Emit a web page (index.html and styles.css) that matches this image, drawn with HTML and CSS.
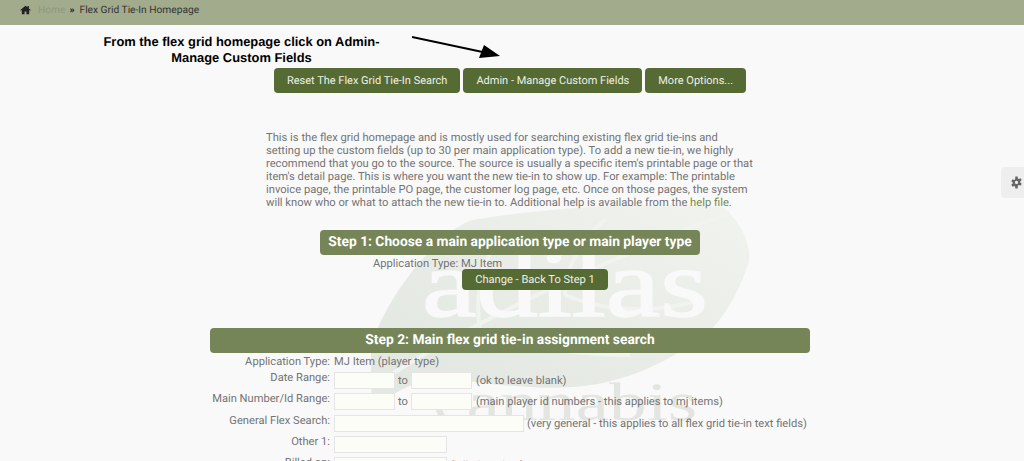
FILE: index.html
```html
<!DOCTYPE html>
<html lang="en">
  <head>
    <meta charset="utf-8" />
    <title>Flex Grid Tie-In Homepage</title>
    <link rel="stylesheet" href="styles.css">
  </head>

  <body>
    <div class="crumbs">
      <svg class="crumbs__home" viewBox="0 0 18 16" width="11" height="10"><path d="M9 1 0.5 8.2l1 1.1L3 8v7h4.5v-4.5h3V15H15V8l1.500 1.300 1-1.100L14.500 5.600V1.500h-2.200v2.200z"/></svg>
      <a class="crumbs__link" href="#">Home</a>
      <span class="crumbs__sep">&raquo;</span>
      <span>Flex Grid Tie-In Homepage</span>
    </div>

    <div class="page">
      <svg class="watermark" viewBox="0 0 400 256" width="400" height="256">
        <defs>
          <linearGradient id="leaf" x1="0" y1="1" x2="1" y2="0">
            <stop offset="0.2" stop-color="#e4e8e2"/>
            <stop offset="1" stop-color="#f1f3ee"/>
          </linearGradient>
        </defs>
        <path fill="url(#leaf)" d="M17 125C40 70 90 20 113 15 200 0 310-3 363 2 395 30 390 60 387 62 375 100 350 128 347 128 300 165 250 180 213 182 170 185 120 178 80 172 55 175 30 190 10 205 15 175 5 150 17 125z"/>
        <path class="watermark__vein" d="M30 170C110 120 230 60 370 8M120 125C115 95 120 60 140 30M205 90C205 65 220 35 245 15M120 125C150 140 210 150 270 150M205 90C240 105 290 110 340 95"/>
        <text class="watermark__big" x="62" y="111" textLength="286" lengthAdjust="spacingAndGlyphs">adilas</text>
        <text class="watermark__small" x="73" y="215" textLength="264" lengthAdjust="spacingAndGlyphs">cannabis</text>
      </svg>

      <div class="note">
        <p class="note__text">From the flex grid homepage click on Admin-Manage Custom Fields</p>
        <svg class="note__arrow" viewBox="0 0 92 24" width="92" height="24"><path d="M0 2 80 19" stroke="#000" stroke-width="2"/><path d="M88 21 67 23 72 10z"/></svg>
      </div>

      <div class="actions">
        <a class="btn" href="#">Reset The Flex Grid Tie-In Search</a>
        <a class="btn" href="#">Admin - Manage Custom Fields</a>
        <a class="btn" href="#">More Options...</a>
      </div>

      <p class="intro">This is the flex grid homepage and is mostly used for searching existing flex grid tie-ins and setting up the custom fields (up to 30 per main application type). To add a new tie-in, we highly recommend that you go to the source. The source is usually a specific item's printable page or that item's detail page. This is where you want the new tie-in to show up. For example: The printable invoice page, the printable PO page, the customer log page, etc. Once on those pages, the system will know who or what to attach the new tie-in to. Additional help is available from the <a href="#">help file</a>.</p>

      <h2 class="step step_one">Step 1: Choose a main application type or main player type</h2>
      <div class="picked">Application Type: MJ Item</div>
      <a class="btn btn_small" href="#">Change - Back To Step 1</a>

      <h2 class="step step_two">Step 2: Main flex grid tie-in assignment search</h2>
      <div class="form">
        <div class="form__row form__row_text">
          <label>Application Type:</label>
          <div>MJ Item (player type)</div>
        </div>
        <div class="form__row">
          <label>Date Range:</label>
          <div class="form__fields"><input class="input" type="text"> to <input class="input" type="text"> <span class="form__hint">(ok to leave blank)</span></div>
        </div>
        <div class="form__row">
          <label>Main Number/Id Range:</label>
          <div class="form__fields"><input class="input" type="text"> to <input class="input" type="text"> <span class="form__hint">(main player id numbers - this applies to mj items)</span></div>
        </div>
        <div class="form__row">
          <label>General Flex Search:</label>
          <div class="form__fields"><input class="input input_wide" type="text"> <span>(very general - this applies to all flex grid tie-in text fields)</span></div>
        </div>
        <div class="form__row">
          <label>Other 1:</label>
          <div class="form__fields"><input class="input input_mid" type="text"></div>
        </div>
        <div class="form__row">
          <label>Billed on:</label>
          <div class="form__fields"><input class="input input_mid" type="text"> <span>(billed on date)</span></div>
        </div>
      </div>
    </div>

    <div class="settings">
      <svg viewBox="0 -0.75 16 16" width="13" height="13"><path fill-rule="evenodd" d="M6.600 0h2.800l.4 2.200 1.200.6L13 1.900l1.400 2.400-1.700 1.500v1.400l1.700 1.500-1.400 2.400-2-.9-1.200.7L9.400 14.500H6.600l-.4-2.200-1.200-.7-2 .9L1.600 10.100l1.700-1.500V7.200L1.600 5.700 3 3.300l2 .9 1.200-.7zM8 5.200a2 2 0 1 0 0 4 2 2 0 0 0 0-4z"/></svg>
    </div>
  </body>
</html>
```

FILE: styles.css
```css
html,
body {
  height: 100%;
}

body {
  margin: 0;
  overflow: hidden;
  background: #f9f9f9;
  color: #747474;
  font-family: Roboto, "Liberation Sans", sans-serif;
  font-size: 12px;
  line-height: 13px;
  text-rendering: geometricPrecision;
}

a {
  text-decoration: none;
}

.crumbs {
  display: flex;
  align-items: center;
  gap: 4px;
  height: 25px;
  padding: 0 0 5px 20px;
  box-sizing: border-box;
  background: #a2ab8b;
  color: #333;
  font-size: 10.200px;
}

.crumbs__home {
  margin-right: 3px;
  fill: #222;
}

.crumbs__link {
  color: #8d9a7d;
}

.crumbs__sep {
  margin-right: 1px;
  color: #222;
  font-weight: bold;
}

.page {
  position: relative;
  width: 600px;
  margin-left: 210px;
}

.watermark {
  position: absolute;
  top: 180px;
  left: 150px;
}

.watermark__vein {
  fill: none;
  stroke: #f1f3ef;
  stroke-width: 4;
}

.watermark__big,
.watermark__small {
  fill: #f9f9f9;
  font-family: "Liberation Serif", serif;
}

.watermark__big {
  stroke: #f9f9f9;
  stroke-width: 1.500;
  font-size: 96px;
}

.watermark__small {
  fill: #e3e5e1;
  font-size: 54px;
}

.note {
  display: flex;
  height: 43px;
  padding-top: 9px;
  box-sizing: border-box;
  margin-left: -110px;
}

.note__text {
  width: 283px;
  margin: 0;
  color: #000;
  font-family: "Liberation Sans", sans-serif;
  font-size: 12.900px;
  font-weight: bold;
  line-height: 16px;
  text-align: center;
}

.note__arrow {
  margin: 1px 0 0 29px;
}

.actions {
  display: flex;
  justify-content: center;
  gap: 3px;
}

.btn {
  display: block;
  box-sizing: border-box;
  height: 25px;
  padding: 0 13px;
  border-radius: 4px;
  background: #566a33;
  color: #eef0e6;
  font-size: 11px;
  line-height: 25px;
}

.intro {
  position: relative;
  width: 487px;
  margin: 38px 0 0 56px;
  font-size: 11.200px;
}

.intro a {
  color: #748a4a;
}

.step {
  position: relative;
  margin: 0;
  border-radius: 4px;
  background: #758558;
  color: #fff;
  font-size: 13.800px;
  font-weight: bold;
  text-align: center;
}

.step_one {
  width: 380px;
  height: 25px;
  margin: 21px 0 0 110px;
  line-height: 25px;
}

.picked {
  position: relative;
  height: 12px;
  margin: 2px 0 0 163px;
  font-size: 11.200px;
}

.btn_small {
  position: relative;
  width: 146px;
  height: 21px;
  margin: 0 0 0 252px;
  padding: 0;
  font-size: 11.100px;
  line-height: 21px;
  text-align: center;
}

.step_two {
  height: 25px;
  margin-top: 38px;
  line-height: 25px;
}

.form {
  position: relative;
  margin-top: 2px;
  font-size: 11.150px;
}

.form__row {
  display: flex;
  gap: 4px;
  height: 21.250px;
}

.form__row_text {
  height: 17px;
}

.form__row label {
  width: 120px;
  margin-top: -1px;
  text-align: right;
}

.form__row_text label {
  margin-top: 0;
}

.form__fields {
  display: flex;
  align-items: center;
  align-self: flex-start;
  gap: 3px;
  white-space: nowrap;
}

.form__hint {
  margin-left: 1px;
}

.input {
  box-sizing: border-box;
  width: 61px;
  height: 17px;
  margin: 0;
  padding: 0;
  border: 1px solid #e5e5e5;
  background: #fdfdf8;
}

.input_wide {
  width: 190px;
}

.input_mid {
  width: 113px;
}

.settings {
  position: absolute;
  top: 167px;
  right: 0;
  display: flex;
  align-items: center;
  justify-content: center;
  box-sizing: border-box;
  width: 23px;
  height: 31px;
  padding-left: 7px;
  border-radius: 4px 0 0 4px;
  background: #eeeeee;
}

.settings svg {
  fill: #666;
}
```
